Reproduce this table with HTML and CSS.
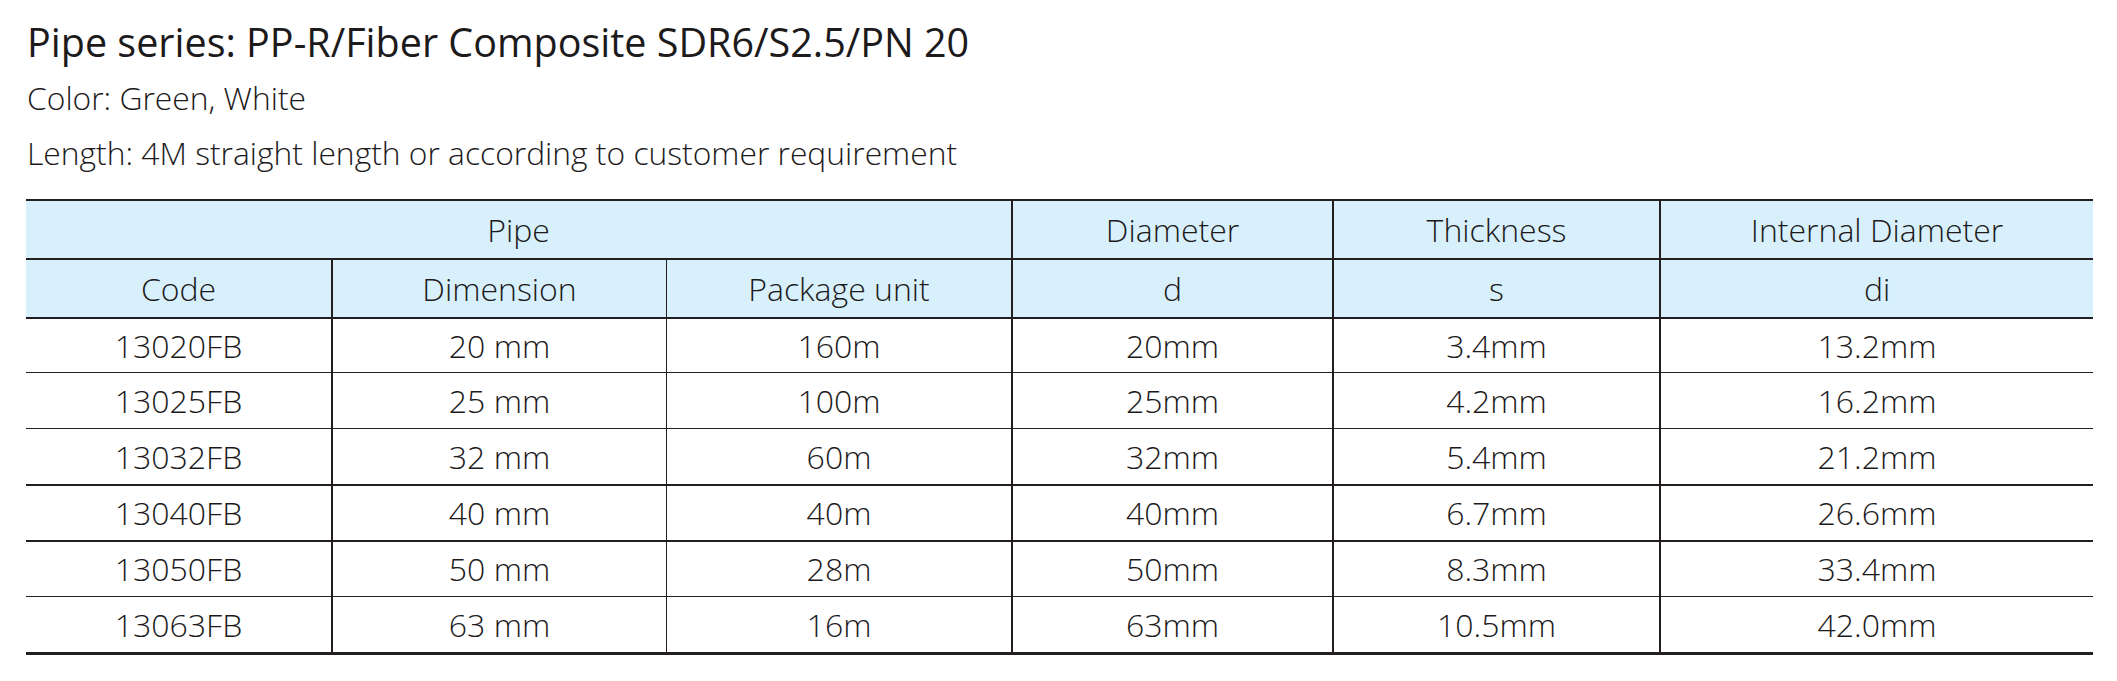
FILE: index.html
```html
<!DOCTYPE html>
<html lang="en">
<head>
<meta charset="utf-8">
<title>Pipe series</title>
<link rel="stylesheet" href="styles.css">
</head>
<body>
<main class="sheet">
  <h1 class="title">Pipe series: PP-R/Fiber Composite SDR6/S2.5/PN 20</h1>
  <p class="info">Color: Green, White</p>
  <p class="info">Length: 4M straight length or according to customer requirement</p>
  <table class="spec">
    <colgroup>
      <col class="c1"><col class="c2"><col class="c3"><col class="c4"><col class="c5"><col class="c6">
    </colgroup>
    <thead>
      <tr class="h1">
        <th colspan="3" class="b2">Pipe</th>
        <th class="b2">Diameter</th>
        <th class="b2">Thickness</th>
        <th>Internal Diameter</th>
      </tr>
      <tr class="h2">
        <th class="b2">Code</th>
        <th class="b1">Dimension</th>
        <th class="b2">Package unit</th>
        <th class="b2">d</th>
        <th class="b2">s</th>
        <th>di</th>
      </tr>
    </thead>
    <tbody>
      <tr class="r1"><td class="b2">13020FB</td><td class="b1">20 mm</td><td class="b2">160m</td><td class="b2">20mm</td><td class="b2">3.4mm</td><td>13.2mm</td></tr>
      <tr class="r2"><td class="b2">13025FB</td><td class="b1">25 mm</td><td class="b2">100m</td><td class="b2">25mm</td><td class="b2">4.2mm</td><td>16.2mm</td></tr>
      <tr class="r3"><td class="b2">13032FB</td><td class="b1">32 mm</td><td class="b2">60m</td><td class="b2">32mm</td><td class="b2">5.4mm</td><td>21.2mm</td></tr>
      <tr class="r4"><td class="b2">13040FB</td><td class="b1">40 mm</td><td class="b2">40m</td><td class="b2">40mm</td><td class="b2">6.7mm</td><td>26.6mm</td></tr>
      <tr class="r5"><td class="b2">13050FB</td><td class="b1">50 mm</td><td class="b2">28m</td><td class="b2">50mm</td><td class="b2">8.3mm</td><td>33.4mm</td></tr>
      <tr class="r6"><td class="b2">13063FB</td><td class="b1">63 mm</td><td class="b2">16m</td><td class="b2">63mm</td><td class="b2">10.5mm</td><td>42.0mm</td></tr>
    </tbody>
  </table>
</main>
</body>
</html>
```

FILE: styles.css
```css
html, body {
  margin: 0;
  padding: 0;
  background: #ffffff;
}

.sheet {
  padding: 20px 0 0 26px;
  color: #1c1a1b;
  font-family: "Open Sans", "Noto Sans", sans-serif;
}

.title {
  margin: 0;
  font-size: 39.5px;
  font-weight: 400;
  line-height: 44px;
  padding-left: 1px;
}

.info {
  margin: 6px 0 0 0;
  font-size: 31.8px;
  font-weight: 300;
  line-height: 55px;
  padding-left: 1px;
}

.info + .info {
  margin-top: 0;
}

.spec {
  margin-top: 19px;
  width: 2067px;
  table-layout: fixed;
  border-collapse: separate;
  border-spacing: 0;
  border-top: 2px solid #231f20;
  font-size: 32px;
  font-weight: 300;
}

.c1 { width: 307px; }
.c2 { width: 334px; }
.c3 { width: 346px; }
.c4 { width: 321px; }
.c5 { width: 327px; }
.c6 { width: 432px; }

.spec th,
.spec td {
  box-sizing: border-box;
  padding: 0;
  text-align: center;
  vertical-align: middle;
  font-weight: 300;
  line-height: 40px;
}

.spec th {
  background: #d8f0fb;
}

.b2 { border-right: 2px solid #231f20; }
.b1 { border-right: 1px solid #231f20; }

.h1 th { height: 59px; border-bottom: 2px solid #231f20; }
.h2 th { height: 59px; border-bottom: 2px solid #231f20; }

.r1 td { height: 54px; border-bottom: 1px solid #231f20; }
.r2 td { height: 56px; border-bottom: 1px solid #231f20; }
.r3 td { height: 57px; border-bottom: 2px solid #231f20; }
.r4 td { height: 56px; border-bottom: 2px solid #231f20; }
.r5 td { height: 55px; border-bottom: 1px solid #231f20; }
.r6 td { height: 58px; border-bottom: 3px solid #231f20; }
```
